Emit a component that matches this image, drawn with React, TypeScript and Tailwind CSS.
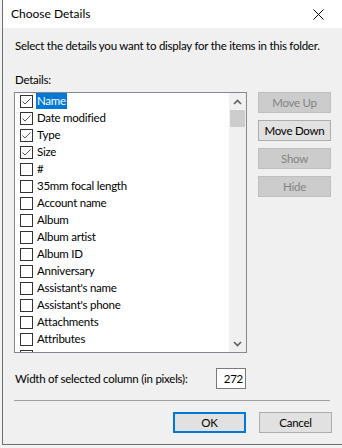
import { useState } from "react";

const fields = [
  { name: "Name", checked: true },
  { name: "Date modified", checked: true },
  { name: "Type", checked: true },
  { name: "Size", checked: true },
  { name: "#", checked: false },
  { name: "35mm focal length", checked: false },
  { name: "Account name", checked: false },
  { name: "Album", checked: false },
  { name: "Album artist", checked: false },
  { name: "Album ID", checked: false },
  { name: "Anniversary", checked: false },
  { name: "Assistant's name", checked: false },
  { name: "Assistant's phone", checked: false },
  { name: "Attachments", checked: false },
  { name: "Attributes", checked: false },
  { name: "Audio format", checked: false },
];

const CheckBox = ({ checked }: { checked: boolean }) => (
  <span className="w-[13px] h-[13px] mt-[2px] border border-[#333333] bg-white flex items-center justify-center shrink-0">
    {checked && (
      <svg width="11" height="11" viewBox="0 0 11 11">
        <polyline points="1.5,5.5 4,8 9.5,2.5" fill="none" stroke="#555555" strokeWidth="1" />
      </svg>
    )}
  </span>
);

const SideButton = ({ label, enabled = false }: { label: string; enabled?: boolean }) => (
  <button
    className={
      enabled
        ? "w-[73px] h-[21px] border border-[#adadad] bg-[#e1e1e1] text-black"
        : "w-[73px] h-[21px] border border-[#bfbfbf] bg-[#cccccc] text-[#838383]"
    }
  >
    {label}
  </button>
);

const App = () => {
  const [selected] = useState(0);

  return (
    <div
      className="w-[342px] h-[448px] overflow-hidden bg-[#f3f3f3] text-[11.5px] tracking-[-0.25px] text-black"
      style={{ fontFamily: 'Lato, "Noto Sans", sans-serif' }}
    >
      <div className="ml-[2px] w-[400px] border-l border-b border-[#6f6f6f] bg-[#f0f0f0]">
        {/* Title bar */}
        <div className="h-[28px] bg-white flex items-center justify-between">
          <span className="ml-[8px] text-[12px] tracking-normal leading-none">Choose Details</span>
          <svg className="mr-[78px]" width="11" height="11" viewBox="0 0 11 11">
            <path d="M0.5 0.5 L10.5 10.5 M10.5 0.5 L0.5 10.5" stroke="#000" strokeWidth="1" />
          </svg>
        </div>

        {/* Body */}
        <div className="pl-[11px] pb-[11px]">
          <p className="mt-[10px] h-[16px] leading-[16px] pl-[1px] whitespace-nowrap">
            Select the details you want to display for the items in this folder.
          </p>
          <p className="mt-[18px] h-[16px] leading-[16px] pl-[1px]">Details:</p>

          <div className="mt-[4px] flex gap-[11px]">
            <div className="w-[233px] h-[261px] border border-[#828790] bg-white flex overflow-hidden">
              <div className="flex-1 flex flex-col overflow-hidden">
                {fields.map((f, i) => (
                  <div key={f.name} className="h-[17px] shrink-0 flex items-start pl-[5px] gap-[3px]">
                    <CheckBox checked={f.checked} />
                    <span
                      className={
                        i === selected
                          ? "h-[16px] leading-[16px] px-[1px] bg-[#0078d7] text-white"
                          : "h-[16px] leading-[16px] px-[1px]"
                      }
                    >
                      {i < 15 ? f.name : ""}
                    </span>
                  </div>
                ))}
              </div>
              {/* Scrollbar */}
              <div className="w-[17px] bg-[#f0f0f0] flex flex-col items-stretch">
                <div className="h-[17px] flex items-center justify-center">
                  <svg width="9" height="6" viewBox="0 0 9 6">
                    <polyline points="1,5 4.5,1.5 8,5" fill="none" stroke="#606060" strokeWidth="1.6" />
                  </svg>
                </div>
                <div className="h-[17px] mx-[1px] bg-[#cdcdcd]" />
                <div className="flex-1" />
                <div className="h-[17px] flex items-center justify-center">
                  <svg width="9" height="6" viewBox="0 0 9 6">
                    <polyline points="1,1 4.5,4.5 8,1" fill="none" stroke="#606060" strokeWidth="1.6" />
                  </svg>
                </div>
              </div>
            </div>

            <div className="flex flex-col gap-[7px]">
              <SideButton label="Move Up" />
              <SideButton label="Move Down" enabled />
              <SideButton label="Show" />
              <SideButton label="Hide" />
            </div>
          </div>

          <div className="mt-[15px] w-[233px] flex items-center justify-between">
            <span className="pl-[1px] whitespace-nowrap">Width of selected column (in pixels):</span>
            <div className="w-[30px] h-[21px] mr-[1px] border border-[#7a7a7a] bg-white flex items-center justify-end pr-[2px]">
              272
            </div>
          </div>

          <div className="mt-[11px] w-[316px] h-px bg-[#a0a0a0]" />

          <div className="mt-[11px] w-[318px] flex justify-end gap-[13px]">
            <button className="w-[73px] h-[21px] border-2 border-[#0078d7] bg-[#e1e1e1]">OK</button>
            <button className="w-[73px] h-[21px] border border-[#adadad] bg-[#e1e1e1]">Cancel</button>
          </div>
        </div>
      </div>
    </div>
  );
};

export default App;
